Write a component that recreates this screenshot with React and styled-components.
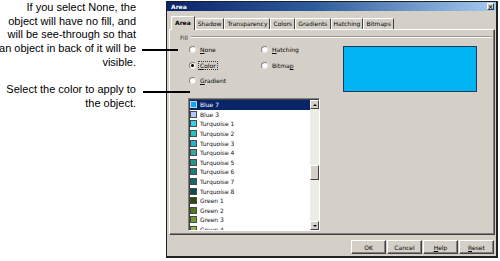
import React from "react";
import styled, { createGlobalStyle } from "styled-components";

const GlobalStyle = createGlobalStyle`
  html, body { margin: 0; padding: 0; background: #fff; }
  body { width: 500px; height: 261px; overflow: hidden; }
`;

const Page = styled.div`
  position: relative;
  display: flex;
  width: 500px;
  height: 261px;
  background: #fff;
  overflow: hidden;
`;

const Callouts = styled.div`
  width: 166px;
  flex: none;
  font-family: "Liberation Sans", Arial, sans-serif;
  font-size: 11px;
  line-height: 13.7px;
  color: #000;
`;

const Note = styled.p`
  margin: ${(p) => p.$top}px 30px 0 -30px;
  text-align: right;
  white-space: nowrap;
`;

// leader lines run from the notes over the dialog
const Leader = styled.div`
  position: absolute;
  left: ${(p) => p.$x}px;
  top: ${(p) => p.$y}px;
  width: ${(p) => p.$w}px;
  height: 2px;
  background: #000;
  z-index: 2;
`;

const Dialog = styled.div`
  width: 332px;
  height: 257px;
  margin-top: 1px;
  box-sizing: border-box;
  background: #d4d0c8;
  border: 1px solid #202020;
  border-right-width: 2px;
  border-bottom-width: 2px;
  display: flex;
  flex-direction: column;
  font-family: "DejaVu Sans", sans-serif;
  font-size: 6px;
  color: #000;
`;

const TitleBar = styled.div`
  height: 9px;
  display: flex;
  align-items: center;
  justify-content: space-between;
  padding: 0 2px 0 4px;
  background: linear-gradient(90deg, #0a246a 0%, #2f5d9c 45%, #a6caf0 100%);
  color: #fff;
  font-weight: bold;
`;

const CloseBox = styled.div`
  width: 7px;
  height: 7px;
  box-sizing: border-box;
  background: #d4d0c8;
  border: 1px solid;
  border-color: #fff #404040 #404040 #fff;
  color: #000;
  font-size: 6px;
  line-height: 5px;
  text-align: center;
  font-weight: bold;
`;

const TabRow = styled.div`
  display: flex;
  align-items: flex-end;
  height: 13px;
  margin: 5px 0 0 4px;
  position: relative;
  z-index: 1;
`;

const Tab = styled.div`
  height: ${(p) => (p.$active ? 14 : 11)}px;
  margin-bottom: ${(p) => (p.$active ? -1 : 0)}px;
  box-sizing: border-box;
  padding: 0 ${(p) => (p.$active ? 3 : 2)}px;
  line-height: ${(p) => (p.$active ? 12 : 10)}px;
  border-top: 1px solid #fff;
  border-left: 1px solid #fff;
  border-right: 1px solid #404040;
  background: #d4d0c8;
  font-weight: ${(p) => (p.$active ? "bold" : "normal")};
  white-space: nowrap;
`;

const TabPage = styled.div`
  height: 206px;
  margin: 0 1px 0 2px;
  box-sizing: border-box;
  border: 1px solid;
  border-color: #fff #404040 #404040 #fff;
  box-shadow: inset -1px -1px 0 #808080;
  padding-top: 3px;
  display: flex;
  flex-direction: column;
`;

const FillHeader = styled.div`
  display: flex;
  align-items: center;
  gap: 3px;
  height: 8px;
  margin: 0 2px 0 10px;
  color: #333;
`;

const Etch = styled.div`
  flex: 1;
  border-top: 1px solid #9a978f;
  border-bottom: 1px solid #fff;
`;

const Content = styled.div`
  display: flex;
  margin: 1px 0 0 18px;
`;

const LeftCol = styled.div`
  width: 132px;
  display: flex;
  flex-direction: column;
`;

const RadioGrid = styled.div`
  display: grid;
  grid-template-columns: 72px auto;
  grid-auto-rows: 15.5px;
  padding-left: 1px;
`;

const Option = styled.label`
  display: flex;
  align-items: center;
  gap: 3px;
  grid-column: ${(p) => p.$col};
  grid-row: ${(p) => p.$row};
`;

const RadioDot = styled.span`
  width: 7px;
  height: 7px;
  box-sizing: border-box;
  border-radius: 50%;
  background: #fff;
  border: 1px solid;
  border-color: #808080 #e8e6e0 #e8e6e0 #808080;
  display: flex;
  align-items: center;
  justify-content: center;
  &::after {
    content: "";
    width: 3px;
    height: 3px;
    border-radius: 50%;
    background: ${(p) => (p.$on ? "#000" : "transparent")};
  }
`;

const OptionText = styled.span`
  padding: 0 1px;
  outline: ${(p) => (p.$focus ? "1px dotted #333" : "none")};
`;

const ListBox = styled.div`
  width: 132px;
  height: 133px;
  margin-top: 9.5px;
  box-sizing: border-box;
  background: #fff;
  border: 1px solid;
  border-color: #808080 #fff #fff #808080;
  box-shadow: inset 1px 1px 0 #404040;
  padding: 1px 0 0 1px;
  display: flex;
`;

const Rows = styled.div`
  flex: 1;
  overflow: hidden;
`;

const Row = styled.div`
  height: 9.6px;
  display: flex;
  align-items: center;
  gap: 3px;
  background: ${(p) => (p.$selected ? "#0a246a" : "transparent")};
  color: ${(p) => (p.$selected ? "#fff" : "#111")};
`;

const Swatch = styled.span`
  width: 7px;
  height: 7px;
  box-sizing: border-box;
  flex: none;
  background: ${(p) => p.$color};
  border: 1px solid ${(p) => (p.$selected ? "#c8d0e8" : "#4a4a4a")};
`;

const ScrollBar = styled.div`
  width: 9px;
  display: flex;
  flex-direction: column;
  background: #eeece6;
`;

const ScrollBtn = styled.div`
  height: 9px;
  box-sizing: border-box;
  background: #d4d0c8;
  border: 1px solid;
  border-color: #fff #404040 #404040 #fff;
  display: flex;
  align-items: center;
  justify-content: center;
  &::after {
    content: "";
    border-left: 2px solid transparent;
    border-right: 2px solid transparent;
    ${(p) => (p.$down ? "border-top: 2px solid #000;" : "border-bottom: 2px solid #000;")}
  }
`;

const Track = styled.div`
  flex: 1;
`;

const Thumb = styled.div`
  height: 15px;
  margin-top: 56px;
  box-sizing: border-box;
  background: #d4d0c8;
  border: 1px solid;
  border-color: #fff #404040 #404040 #fff;
`;

const Preview = styled.div`
  width: 134px;
  height: 46px;
  margin: 4px 0 0 23px;
  box-sizing: border-box;
  background: #00b4f2;
  border: 1px solid #1d3a5a;
`;

const ButtonRow = styled.div`
  display: flex;
  justify-content: flex-end;
  gap: 1px;
  margin: 5px 2px 0 0;
`;

const Button = styled.div`
  width: 35px;
  height: 14px;
  box-sizing: border-box;
  background: #d4d0c8;
  border: 1px solid;
  border-color: #fff #404040 #404040 #fff;
  box-shadow: inset -1px -1px 0 #808080;
  display: flex;
  align-items: center;
  justify-content: center;
`;

const colors = [
  ["Blue 7", "#00aef0"],
  ["Blue 3", "#b3c4ff"],
  ["Turquoise 1", "#2ad6ec"],
  ["Turquoise 2", "#1fc4bf"],
  ["Turquoise 3", "#28b4c8"],
  ["Turquoise 4", "#35a8a4"],
  ["Turquoise 5", "#2a9690"],
  ["Turquoise 6", "#18807c"],
  ["Turquoise 7", "#0f6b6a"],
  ["Turquoise 8", "#0b4c50"],
  ["Green 1", "#2c4a05"],
  ["Green 2", "#4f7a1c"],
  ["Green 3", "#6d9a30"],
  ["Green 4", "#8fb650"],
];

const tabs = ["Area", "Shadow", "Transparency", "Colors", "Gradients", "Hatching", "Bitmaps"];

export default function App() {
  return (
    <Page>
      <GlobalStyle />
      <Callouts>
        <Note $top={1}>
          If you select None, the
          <br />
          object will have no fill, and
          <br />
          will be see-through so that
          <br />
          an object in back of it will be
          <br />
          visible.
        </Note>
        <Note $top={13.5}>
          Select the color to apply to
          <br />
          the object.
        </Note>
      </Callouts>
      <Leader $x={142} $y={49} $w={36} />
      <Leader $x={143} $y={91} $w={47} />

      <Dialog>
        <TitleBar>
          <span>Area</span>
          <CloseBox>×</CloseBox>
        </TitleBar>
        <TabRow>
          {tabs.map((t, i) => (
            <Tab key={t} $active={i === 0}>
              {t}
            </Tab>
          ))}
        </TabRow>
        <TabPage>
          <FillHeader>
            <span>Fill</span>
            <Etch />
          </FillHeader>
          <Content>
            <LeftCol>
              <RadioGrid>
                <Option $col={1} $row={1}>
                  <RadioDot />
                  <OptionText><u>N</u>one</OptionText>
                </Option>
                <Option $col={1} $row={2}>
                  <RadioDot $on />
                  <OptionText $focus><u>C</u>olor</OptionText>
                </Option>
                <Option $col={1} $row={3}>
                  <RadioDot />
                  <OptionText><u>G</u>radient</OptionText>
                </Option>
                <Option $col={2} $row={1}>
                  <RadioDot />
                  <OptionText><u>H</u>atching</OptionText>
                </Option>
                <Option $col={2} $row={2}>
                  <RadioDot />
                  <OptionText>Bitma<u>p</u></OptionText>
                </Option>
              </RadioGrid>
              <ListBox>
                <Rows>
                  {colors.map(([name, c], i) => (
                    <Row key={name} $selected={i === 0}>
                      <Swatch $color={c} $selected={i === 0} />
                      {name}
                    </Row>
                  ))}
                </Rows>
                <ScrollBar>
                  <ScrollBtn />
                  <Track>
                    <Thumb />
                  </Track>
                  <ScrollBtn $down />
                </ScrollBar>
              </ListBox>
            </LeftCol>
            <Preview />
          </Content>
        </TabPage>
        <ButtonRow>
          <Button>OK</Button>
          <Button>Cancel</Button>
          <Button><span><u>H</u>elp</span></Button>
          <Button><span><u>R</u>eset</span></Button>
        </ButtonRow>
      </Dialog>
    </Page>
  );
}
